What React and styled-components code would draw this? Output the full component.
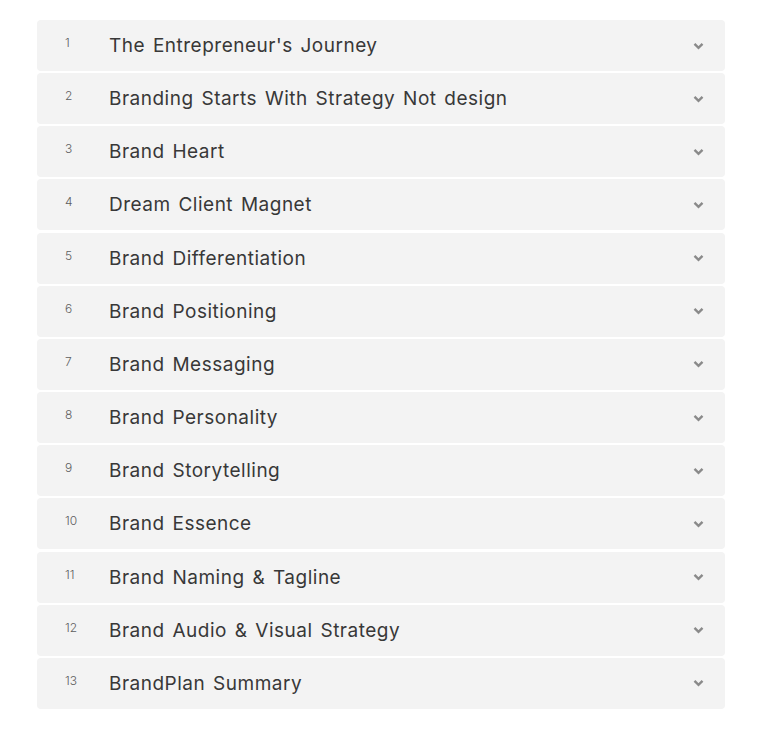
import React from "react";
import styled, { createGlobalStyle } from "styled-components";

const GlobalStyle = createGlobalStyle`
  body {
    margin: 0;
    background: #ffffff;
    font-family: "Inter", "Open Sans", sans-serif;
  }
`;

const List = styled.div`
  display: flex;
  flex-direction: column;
  gap: 2.17px;
  padding: 20px 43px 0 37px;
`;

const Row = styled.div`
  height: 51px;
  background-color: #f3f3f3;
  border-radius: 4px;
  display: flex;
  align-items: center;
  padding: 0 20px 0 0;
`;

const Num = styled.span`
  width: 72px;
  padding-left: 28px;
  box-sizing: border-box;
  font-size: 12px;
  font-weight: 300;
  color: #5e5e5e;
  align-self: flex-start;
  margin-top: 15px;
`;

const Title = styled.span`
  flex: 1;
  font-size: 19px;
  font-weight: 400;
  color: #383838;
  letter-spacing: 0.5px;
  word-spacing: 2px;
`;

const Chevron = styled.svg`
  width: 11px;
  height: 8px;
  margin-right: 1px;
`;

const items = [
  "The Entrepreneur's Journey",
  "Branding Starts With Strategy Not design",
  "Brand Heart",
  "Dream Client Magnet",
  "Brand Differentiation",
  "Brand Positioning",
  "Brand Messaging",
  "Brand Personality",
  "Brand Storytelling",
  "Brand Essence",
  "Brand Naming & Tagline",
  "Brand Audio & Visual Strategy",
  "BrandPlan Summary",
];

const App = () => {
  return (
    <>
      <GlobalStyle />
      <List>
        {items.map((t, i) => (
          <Row key={t}>
            <Num>{i + 1}</Num>
            <Title>{t}</Title>
            <Chevron viewBox="0 0 11 8">
              <path
                d="M1.5 1.8 L5.5 5.8 L9.5 1.8"
                fill="none"
                stroke="#8a8a8a"
                strokeWidth="2.4"
                strokeLinecap="butt"
              />
            </Chevron>
          </Row>
        ))}
      </List>
    </>
  );
};

export default App;
